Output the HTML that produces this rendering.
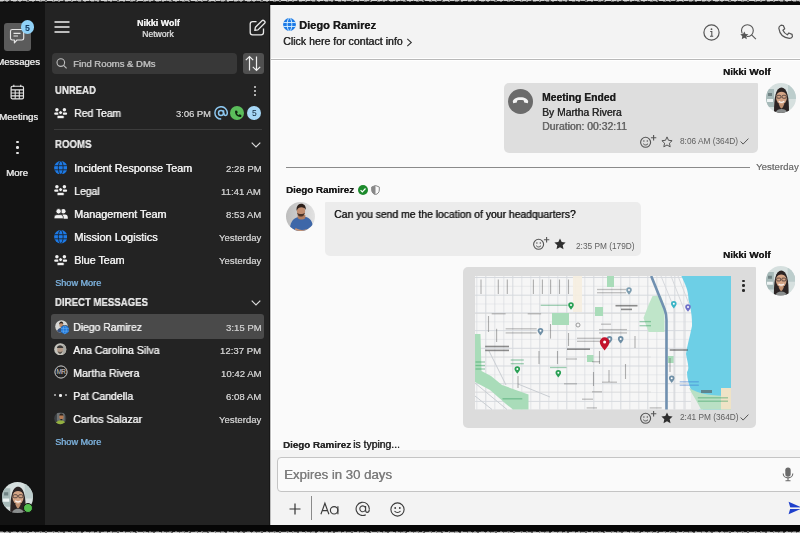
<!DOCTYPE html>
<html><head><meta charset="utf-8">
<style>
*{margin:0;padding:0;box-sizing:border-box}
html,body{width:800px;height:533px;overflow:hidden;background:#060606;font-family:"Liberation Sans",sans-serif;position:relative}
.a{position:absolute;display:block}
.t{position:absolute;white-space:nowrap;line-height:1;will-change:transform}
</style></head><body>
<div class="a" style="left:0px;top:0px;width:800px;height:1px;background:repeating-linear-gradient(90deg,#d2d2d2 0 4px,#9a9a9a 4px 5px,#c4c4c4 5px 9px,#6a6a6a 9px 11px,#d8d8d8 11px 17px,#8a8a8a 17px 18px);border-radius:0px;"></div>
<div class="a" style="left:0px;top:1px;width:800px;height:1px;background:repeating-linear-gradient(90deg,#6a6a6a 0 3px,#2a2a2a 3px 6px,#7a7a7a 6px 8px,#1a1a1a 8px 13px);border-radius:0px;"></div>
<div class="a" style="left:0px;top:531px;width:800px;height:1px;background:repeating-linear-gradient(90deg,#5a5a5a 0 3px,#1a1a1a 3px 6px,#6a6a6a 6px 8px,#2a2a2a 8px 13px);border-radius:0px;"></div>
<div class="a" style="left:0px;top:532px;width:800px;height:1px;background:repeating-linear-gradient(90deg,#c8c8c8 0 4px,#8a8a8a 4px 5px,#bcbcbc 5px 9px,#6a6a6a 9px 11px,#d0d0d0 11px 17px,#8a8a8a 17px 18px);border-radius:0px;"></div>
<div class="a" style="left:0px;top:3px;width:45px;height:522px;background:#131313;border-radius:0px;"></div>
<div class="a" style="left:45px;top:3px;width:224px;height:522px;background:#232323;border-radius:0px;"></div>
<div class="a" style="left:269px;top:3px;width:1px;height:522px;background:#171717;border-radius:0px;"></div>
<div class="a" style="left:270px;top:5px;width:530px;height:520px;background:#fafafa;border-radius:0px;"></div>
<div class="a" style="left:271px;top:5px;width:1px;height:520px;background:#ffffff;border-radius:0px;"></div>
<div class="a" style="left:270px;top:5px;width:530px;height:54px;background:#f3f3f3;border-radius:0px;"></div>
<div class="a" style="left:270px;top:58px;width:530px;height:1px;background:#ffffff;border-radius:0px;"></div>
<div class="a" style="left:270px;top:59px;width:530px;height:1px;background:#b8b8b8;border-radius:0px;"></div>
<div class="a" style="left:270px;top:60px;width:530px;height:1px;background:#ffffff;border-radius:0px;"></div>
<div class="a" style="left:270px;top:5px;width:1px;height:520px;background:#bdbdbd;border-radius:0px;"></div>
<div class="a" style="left:4px;top:23px;width:27px;height:28px;background:#5b5b5b;border-radius:3px;"></div>
<svg class="a" style="left:9px;top:28px" width="17" height="18" viewBox="0 0 17 18"><path d="M3.2 1.5h9.8q1.7 0 1.7 1.7v7.1q0 1.7-1.7 1.7h-5l-2.6 2.9v-2.9h-2.2q-1.7 0-1.7-1.7v-7.1q0-1.7 1.7-1.7z" fill="none" stroke="#e6e6e6" stroke-width="1.15" stroke-linejoin="round"/><path d="M4.5 5.3h7M4.5 8h4.5" stroke="#e6e6e6" stroke-width="1.2"/></svg>
<div class="a" style="left:20.5px;top:20.2px;width:13.8px;height:13.8px;border-radius:50%;background:#8fd1f7"></div>
<div class="t" style="left:24.95px;top:24.00px;font-size:8.8px;color:#143a60;font-weight:bold;">5</div>
<div class="t" style="left:-4.38px;top:57.00px;font-size:9.6px;color:#e2e2e2;text-shadow:0.468px 0 0 currentColor;">Messages</div>
<svg class="a" style="left:10px;top:84.3px" width="14.6" height="16.4" viewBox="0 0 16 18"><rect x="1.2" y="2.5" width="13.6" height="13.8" rx="1.5" fill="none" stroke="#e6e6e6" stroke-width="1.3"/><path d="M1.2 6.5h13.6M1.2 9.8h13.6M1.2 13h13.6M5.7 6.5v9.8M10.2 6.5v9.8M4.2 0.8v2.5M11.8 0.8v2.5" stroke="#e6e6e6" stroke-width="1.2"/></svg>
<div class="t" style="left:-1.48px;top:112.00px;font-size:9.6px;color:#e2e2e2;text-shadow:0.468px 0 0 currentColor;">Meetings</div>
<div class="a" style="left:16.3px;top:140.8px;width:2.4px;height:2.4px;border-radius:50%;background:#e6e6e6"></div>
<div class="a" style="left:16.3px;top:146.3px;width:2.4px;height:2.4px;border-radius:50%;background:#e6e6e6"></div>
<div class="a" style="left:16.3px;top:151.8px;width:2.4px;height:2.4px;border-radius:50%;background:#e6e6e6"></div>
<div class="t" style="left:6.06px;top:168.00px;font-size:9.6px;color:#e2e2e2;text-shadow:0.468px 0 0 currentColor;">More</div>
<svg class="a" style="left:54px;top:20px" width="16" height="14" viewBox="0 0 16 14"><path d="M0.5 2h15M0.5 7h15M0.5 12h15" stroke="#f0f0f0" stroke-width="1.6"/></svg>
<div class="t" style="left:136.57px;top:19.00px;font-size:8.9px;color:#f0f0f0;font-weight:bold;text-shadow:0.128px 0 0 currentColor;">Nikki Wolf</div>
<div class="t" style="left:142.23px;top:30.00px;font-size:8.6px;color:#d6d6d6;text-shadow:0.468px 0 0 currentColor;">Network</div>
<svg class="a" style="left:248px;top:19px" width="18" height="18" viewBox="0 0 18 18"><path d="M8.5 2.6H4.6Q2.2 2.6 2.2 5V13.4Q2.2 15.8 4.6 15.8H13.1Q15.5 15.8 15.5 13.4V9.5" fill="none" stroke="#eaeaea" stroke-width="1.3"/><path d="M6.8 11.4l0.6-3.1 6.6-6.6q1-1 2 0l0.6 0.6q1 1 0 2l-6.6 6.6z" fill="none" stroke="#eaeaea" stroke-width="1.3" stroke-linejoin="round"/></svg>
<div class="a" style="left:51.5px;top:52.5px;width:185.5px;height:21.5px;background:#383838;border-radius:4px;"></div>
<svg class="a" style="left:56px;top:58px" width="12" height="11" viewBox="0 0 12 11"><circle cx="4.8" cy="4.6" r="3.8" fill="none" stroke="#bdbdbd" stroke-width="1.1"/><path d="M7.6 7.4l3 3" stroke="#bdbdbd" stroke-width="1.2"/></svg>
<div class="t" style="left:73.20px;top:59.00px;font-size:9.5px;color:#bcbcbc;text-shadow:0.468px 0 0 currentColor;">Find Rooms &amp; DMs</div>
<div class="a" style="left:242.5px;top:52.5px;width:21.5px;height:21.5px;background:#505050;border-radius:3px;"></div>
<svg class="a" style="left:244px;top:55px" width="18" height="17" viewBox="0 0 18 17"><path d="M5.5 15.5V1.5M1.8 5.2l3.7-3.7 3.7 3.7" fill="none" stroke="#efefef" stroke-width="1.2"/><path d="M12.5 1.5v14M8.8 11.8l3.7 3.7 3.7-3.7" fill="none" stroke="#efefef" stroke-width="1.2"/></svg>
<div class="t" style="left:55.20px;top:85.00px;font-size:10.5px;color:#e4e4e4;font-weight:bold;text-shadow:0.043px 0 0 currentColor;transform:scaleX(0.91);transform-origin:0 0;">UNREAD</div>
<div class="a" style="left:254.2px;top:86px;width:2px;height:2px;border-radius:50%;background:#dcdcdc"></div>
<div class="a" style="left:254.2px;top:90.2px;width:2px;height:2px;border-radius:50%;background:#dcdcdc"></div>
<div class="a" style="left:254.2px;top:94.4px;width:2px;height:2px;border-radius:50%;background:#dcdcdc"></div>
<svg class="a" style="left:54px;top:107.8px" width="14" height="11" viewBox="0 0 14 11"><circle cx="2.9" cy="1.8" r="1.75" fill="#f2f2f2"/><circle cx="10.4" cy="1.8" r="1.75" fill="#f2f2f2"/><rect x="0.2" y="4.6" width="4.4" height="2.1" rx="1" fill="#f2f2f2"/><rect x="8.7" y="4.6" width="4.4" height="2.1" rx="1" fill="#f2f2f2"/><circle cx="6.6" cy="4.6" r="1.95" fill="#f2f2f2" stroke="#232323" stroke-width="0.9"/><rect x="2.9" y="7.4" width="7.4" height="3.2" rx="1.5" fill="#f2f2f2" stroke="#232323" stroke-width="0.7"/></svg>
<div class="t" style="left:73.50px;top:108.00px;font-size:10.7px;color:#ededed;text-shadow:0.468px 0 0 currentColor;transform:scaleX(0.9656);transform-origin:0 0;">Red Team</div>
<div class="t" style="left:176.20px;top:109.00px;font-size:9.4px;color:#c6c6c6;text-shadow:0.102px 0 0 currentColor;">3:06 PM</div>
<svg class="a" style="left:214.2px;top:106.3px" width="14" height="14" viewBox="0 0 14 14"><path d="M9.9 7.2c0 1.5 0.8 2.2 1.8 2.2s1.6-1.1 1.6-2.6A6.2 6.2 0 1 0 7.2 13.1" fill="none" stroke="#8cc6ee" stroke-width="1.5"/><circle cx="7" cy="6.9" r="2.5" fill="none" stroke="#8cc6ee" stroke-width="1.5"/><path d="M9.6 4.3v3.8" stroke="#8cc6ee" stroke-width="1.4"/></svg>
<div class="a" style="left:230.3px;top:106.4px;width:14px;height:14px;border-radius:50%;background:#5bbd5b"></div>
<svg class="a" style="left:233.5px;top:109.5px" width="8" height="8" viewBox="0 0 8 8"><path d="M1.6 0.6l1.5 0.1 0.7 1.8-0.9 0.7c0.4 0.9 1 1.5 1.9 1.9l0.7-0.9 1.8 0.7 0.1 1.5c-0.3 0.5-0.8 0.7-1.4 0.7C3.2 6.8 1.2 4.8 1 2c0-0.6 0.2-1.1 0.6-1.4z" fill="#10240f"/></svg>
<div class="a" style="left:247.2px;top:106.4px;width:14px;height:14px;border-radius:50%;background:#a6d7f6"></div>
<div class="t" style="left:251.94px;top:109.00px;font-size:8.5px;color:#10283c;">5</div>
<div class="a" style="left:54px;top:129px;width:208px;height:1px;background:#3c3c3c;border-radius:0px;"></div>
<div class="t" style="left:55.00px;top:139.00px;font-size:10.5px;color:#e4e4e4;font-weight:bold;text-shadow:0.043px 0 0 currentColor;transform:scaleX(0.92);transform-origin:0 0;">ROOMS</div>
<svg class="a" style="left:250.5px;top:141.5px" width="10" height="6" viewBox="0 0 10 6"><path d="M0.7 0.7l4.3 4.3 4.3-4.3" fill="none" stroke="#dcdcdc" stroke-width="1.2"/></svg>
<svg class="a" style="left:53.8px;top:160.7px" width="13.5" height="13.5" viewBox="0 0 13 13"><circle cx="6.5" cy="6.5" r="6.4" fill="#1d7ae6"/><g stroke="#1b2a3c" stroke-width="0.9" fill="none"><ellipse cx="6.5" cy="6.5" rx="2.3" ry="6.4"/><path d="M0.3 4.5h12.4M0.3 8.5h12.4"/></g></svg>
<div class="t" style="left:73.50px;top:163.00px;font-size:10.7px;color:#ededed;text-shadow:0.468px 0 0 currentColor;transform:scaleX(1.0037);transform-origin:0 0;">Incident Response Team</div>
<div class="t" style="left:225.55px;top:164.00px;font-size:9.6px;color:#c6c6c6;text-shadow:0.102px 0 0 currentColor;">2:28 PM</div>
<svg class="a" style="left:54px;top:185.4px" width="14" height="11" viewBox="0 0 14 11"><circle cx="2.9" cy="1.8" r="1.75" fill="#f2f2f2"/><circle cx="10.4" cy="1.8" r="1.75" fill="#f2f2f2"/><rect x="0.2" y="4.6" width="4.4" height="2.1" rx="1" fill="#f2f2f2"/><rect x="8.7" y="4.6" width="4.4" height="2.1" rx="1" fill="#f2f2f2"/><circle cx="6.6" cy="4.6" r="1.95" fill="#f2f2f2" stroke="#232323" stroke-width="0.9"/><rect x="2.9" y="7.4" width="7.4" height="3.2" rx="1.5" fill="#f2f2f2" stroke="#232323" stroke-width="0.7"/></svg>
<div class="t" style="left:73.50px;top:186.00px;font-size:10.7px;color:#ededed;text-shadow:0.468px 0 0 currentColor;transform:scaleX(0.9741);transform-origin:0 0;">Legal</div>
<div class="t" style="left:221.45px;top:187.00px;font-size:9.6px;color:#c6c6c6;text-shadow:0.102px 0 0 currentColor;">11:41 AM</div>
<svg class="a" style="left:54px;top:207.9px" width="14" height="11" viewBox="0 0 14 11"><circle cx="9.3" cy="3.3" r="2.3" fill="#f2f2f2"/><path d="M8.5 6.6h2.5c1.8 0 2.8 1.3 2.8 3v1.2H8.5z" fill="#f2f2f2"/><circle cx="4.6" cy="3.3" r="2.7" fill="#f2f2f2" stroke="#232323" stroke-width="0.9"/><path d="M0.1 10.8V9.6c0-1.8 1.1-3 2.9-3h3.4c1.8 0 2.9 1.2 2.9 3v1.2z" fill="#f2f2f2" stroke="#232323" stroke-width="0.8"/></svg>
<div class="t" style="left:73.50px;top:209.00px;font-size:10.7px;color:#ededed;text-shadow:0.468px 0 0 currentColor;transform:scaleX(1.011);transform-origin:0 0;">Management Team</div>
<div class="t" style="left:226.08px;top:210.00px;font-size:9.6px;color:#c6c6c6;text-shadow:0.102px 0 0 currentColor;">8:53 AM</div>
<svg class="a" style="left:53.8px;top:230.1px" width="13.5" height="13.5" viewBox="0 0 13 13"><circle cx="6.5" cy="6.5" r="6.4" fill="#1d7ae6"/><g stroke="#1b2a3c" stroke-width="0.9" fill="none"><ellipse cx="6.5" cy="6.5" rx="2.3" ry="6.4"/><path d="M0.3 4.5h12.4M0.3 8.5h12.4"/></g></svg>
<div class="t" style="left:73.50px;top:232.00px;font-size:10.7px;color:#ededed;text-shadow:0.468px 0 0 currentColor;transform:scaleX(1.035);transform-origin:0 0;">Mission Logistics</div>
<div class="t" style="left:218.96px;top:233.00px;font-size:9.6px;color:#c6c6c6;text-shadow:0.102px 0 0 currentColor;">Yesterday</div>
<svg class="a" style="left:54px;top:254.9px" width="14" height="11" viewBox="0 0 14 11"><circle cx="2.9" cy="1.8" r="1.75" fill="#f2f2f2"/><circle cx="10.4" cy="1.8" r="1.75" fill="#f2f2f2"/><rect x="0.2" y="4.6" width="4.4" height="2.1" rx="1" fill="#f2f2f2"/><rect x="8.7" y="4.6" width="4.4" height="2.1" rx="1" fill="#f2f2f2"/><circle cx="6.6" cy="4.6" r="1.95" fill="#f2f2f2" stroke="#232323" stroke-width="0.9"/><rect x="2.9" y="7.4" width="7.4" height="3.2" rx="1.5" fill="#f2f2f2" stroke="#232323" stroke-width="0.7"/></svg>
<div class="t" style="left:73.50px;top:255.00px;font-size:10.7px;color:#ededed;text-shadow:0.468px 0 0 currentColor;transform:scaleX(0.9909);transform-origin:0 0;">Blue Team</div>
<div class="t" style="left:218.96px;top:256.00px;font-size:9.6px;color:#c6c6c6;text-shadow:0.102px 0 0 currentColor;">Yesterday</div>
<div class="t" style="left:55.00px;top:279.00px;font-size:9.1px;color:#79acd6;text-shadow:0.468px 0 0 currentColor;">Show More</div>
<div class="t" style="left:55.00px;top:297.00px;font-size:10.5px;color:#e4e4e4;font-weight:bold;text-shadow:0.043px 0 0 currentColor;transform:scaleX(0.916);transform-origin:0 0;">DIRECT MESSAGES</div>
<svg class="a" style="left:250.5px;top:300px" width="10" height="6" viewBox="0 0 10 6"><path d="M0.7 0.7l4.3 4.3 4.3-4.3" fill="none" stroke="#dcdcdc" stroke-width="1.2"/></svg>
<div class="a" style="left:51px;top:314px;width:213px;height:25px;background:#4a4a4a;border-radius:3px;"></div>
<svg class="a" style="left:54.5px;top:320px" width="13" height="13" viewBox="0 0 13 13"><defs><clipPath id="cds"><circle cx="6.5" cy="6.5" r="6.3"/></clipPath></defs><g clip-path="url(#cds)"><rect width="13" height="13" fill="#d8d8d6"/><path d="M1.5 13c0.4-3.4 2.2-5 4.6-5s3.8 1.6 4.3 5z" fill="#34507e"/><ellipse cx="6.2" cy="5" rx="1.9" ry="2.4" fill="#c09070"/><path d="M4.2 4.6c0-2 0.9-3 2.1-3s2 0.8 2 2.6c-0.6-0.6-1.3-0.9-2-0.9s-1.5 0.4-2.1 1.3z" fill="#2a211c"/></g></svg>
<svg class="a" style="left:59.9px;top:325.2px" width="9.6" height="9.6" viewBox="0 0 9.6 9.6"><circle cx="4.8" cy="4.8" r="4.7" fill="#4a4a4a"/><circle cx="4.8" cy="4.8" r="4.1" fill="#1f78dc"/><g stroke="#6cb0f0" stroke-width="0.6" fill="none"><ellipse cx="4.8" cy="4.8" rx="1.6" ry="4.1"/><path d="M0.8 3.4h8M0.8 6.2h8"/></g></svg>
<div class="t" style="left:73.30px;top:322.00px;font-size:10.7px;color:#ededed;text-shadow:0.468px 0 0 currentColor;transform:scaleX(0.9737);transform-origin:0 0;">Diego Ramirez</div>
<div class="t" style="left:225.55px;top:323.00px;font-size:9.6px;color:#c6c6c6;text-shadow:0.102px 0 0 currentColor;">3:15 PM</div>
<svg class="a" style="left:54.4px;top:342.8px" width="12.6" height="12.6" viewBox="0 0 13 13"><defs><clipPath id="cas"><circle cx="6.5" cy="6.5" r="6.3"/></clipPath></defs><g clip-path="url(#cas)"><rect width="13" height="13" fill="#c4c3bc"/><rect x="9" y="0" width="4" height="13" fill="#a9a8a2"/><ellipse cx="6.3" cy="7" rx="3" ry="3.6" fill="#b39a88"/><path d="M3 5.2c0.3-2 1.6-2.8 3.3-2.8s3 0.8 3.3 2.8z" fill="#3a3836"/><path d="M3.8 8.6c0.6 2 1.5 2.8 2.5 2.8s1.9-0.8 2.5-2.8c-0.8 0.5-1.6 0.7-2.5 0.7s-1.7-0.2-2.5-0.7z" fill="#5c5650"/></g></svg>
<div class="t" style="left:73.30px;top:345.00px;font-size:10.7px;color:#ededed;text-shadow:0.468px 0 0 currentColor;transform:scaleX(0.9816);transform-origin:0 0;">Ana Carolina Silva</div>
<div class="t" style="left:220.21px;top:346.00px;font-size:9.6px;color:#c6c6c6;text-shadow:0.102px 0 0 currentColor;">12:37 PM</div>
<svg class="a" style="left:53.5px;top:365.1px" width="14" height="14" viewBox="0 0 14 14"><circle cx="7" cy="7" r="6.1" fill="none" stroke="#cfcfcf" stroke-width="1"/><text x="7" y="9.3" font-size="6.4" fill="#cfcfcf" text-anchor="middle" font-family="Liberation Sans" letter-spacing="-0.4">MR</text></svg>
<div class="t" style="left:73.30px;top:368.00px;font-size:10.7px;color:#ededed;text-shadow:0.468px 0 0 currentColor;transform:scaleX(0.9853);transform-origin:0 0;">Martha Rivera</div>
<div class="t" style="left:220.74px;top:369.00px;font-size:9.6px;color:#c6c6c6;text-shadow:0.102px 0 0 currentColor;">10:42 AM</div>
<div class="a" style="left:54.3px;top:394.4px;width:2.0px;height:2.0px;border-radius:50%;background:#bdbdbd"></div>
<div class="a" style="left:59.2px;top:394.09999999999997px;width:2.6px;height:2.6px;border-radius:50%;background:#f0f0f0"></div>
<div class="a" style="left:64.5px;top:394.4px;width:2.0px;height:2.0px;border-radius:50%;background:#bdbdbd"></div>
<div class="t" style="left:73.30px;top:391.00px;font-size:10.7px;color:#ededed;text-shadow:0.468px 0 0 currentColor;transform:scaleX(0.9793);transform-origin:0 0;">Pat Candella</div>
<div class="t" style="left:226.08px;top:392.00px;font-size:9.6px;color:#c6c6c6;text-shadow:0.102px 0 0 currentColor;">6:08 AM</div>
<svg class="a" style="left:54.4px;top:412.2px" width="12.6" height="12.6" viewBox="0 0 13 13"><defs><clipPath id="ccs"><circle cx="6.5" cy="6.5" r="6.3"/></clipPath></defs><g clip-path="url(#ccs)"><rect width="13" height="13" fill="#3c4044"/><rect x="3" y="1" width="8" height="8" fill="#6e7274"/><ellipse cx="7.6" cy="5" rx="2.2" ry="2.8" fill="#b57a52"/><path d="M5.4 3.6c0.3-1.4 1.1-2 2.2-2s1.9 0.6 2.2 2z" fill="#2a2420"/><path d="M1 13c0.8-3 3-4.6 6-4.6s5 1.6 5.6 4.6z" fill="#93b040"/><path d="M6.6 7.2h2v1.4h-2z" fill="#222"/></g></svg>
<div class="t" style="left:73.30px;top:414.00px;font-size:10.7px;color:#ededed;text-shadow:0.468px 0 0 currentColor;transform:scaleX(0.9819);transform-origin:0 0;">Carlos Salazar</div>
<div class="t" style="left:218.96px;top:415.00px;font-size:9.6px;color:#c6c6c6;text-shadow:0.102px 0 0 currentColor;">Yesterday</div>
<div class="t" style="left:55.00px;top:438.00px;font-size:9.1px;color:#79acd6;text-shadow:0.468px 0 0 currentColor;">Show More</div>
<svg class="a" style="left:2px;top:482px" width="31" height="31" viewBox="0 0 30 30"><defs><clipPath id="nk1"><circle cx="15" cy="15" r="15"/></clipPath></defs><g clip-path="url(#nk1)"><rect width="30" height="30" fill="#d6e0df"/><path d="M0 6h8v18H0z" fill="#a7bab9"/><path d="M2 10h4v3H2z" fill="#6f8283"/><path d="M1 16h6v3H1z" fill="#eef4f4"/><path d="M22 2h8v14h-8z" fill="#bccdcc"/><path d="M8 30c0-8 0.3-14 1.6-18.5C11 7 12.8 4.6 15.5 4.6s4.6 2.4 6 6.9c1.3 4.5 1.5 10.5 1.5 18.5z" fill="#2c2424"/><path d="M9 31c1.2-3.8 3.5-5 6.5-5s5.3 1.2 6.5 5z" fill="#8a8e8e"/><path d="M12.7 21c1 2.6 1.8 4.4 2.8 4.4s1.8-1.8 2.8-4.4z" fill="#c09070"/><ellipse cx="15.5" cy="14.6" rx="5.4" ry="6.9" fill="#d4a586"/><path d="M10 12c0.4-4 2.6-6.4 5.5-6.4s5.1 2.4 5.5 6.4c-1.5-2.4-3.4-3.3-5.5-3.3s-4 0.9-5.5 3.3z" fill="#2c2424"/><rect x="10.8" y="12.3" width="4.1" height="2.9" rx="1" fill="none" stroke="#3a3030" stroke-width="0.75"/><rect x="16.1" y="12.3" width="4.1" height="2.9" rx="1" fill="none" stroke="#3a3030" stroke-width="0.75"/><path d="M12.8 18.2c1.6 1.4 3.8 1.4 5.4 0" fill="none" stroke="#f8f2f0" stroke-width="1.4"/></g></svg>
<div class="a" style="left:23px;top:503px;width:10px;height:10px;border-radius:50%;background:#55c14f;border:1px solid #131313"></div>
<svg class="a" style="left:282.5px;top:18.3px" width="13" height="13" viewBox="0 0 13 13"><circle cx="6.5" cy="6.5" r="6.4" fill="#1d7ae6"/><g stroke="#d8f0ff" stroke-width="0.9" fill="none"><ellipse cx="6.5" cy="6.5" rx="2.3" ry="6.4"/><path d="M0.3 4.5h12.4M0.3 8.5h12.4"/></g></svg>
<div class="t" style="left:298.50px;top:20.00px;font-size:11.1px;color:#1a1a1a;font-weight:bold;text-shadow:0.128px 0 0 currentColor;">Diego Ramirez</div>
<div class="t" style="left:283.00px;top:36.00px;font-size:10.6px;color:#2a2a2a;text-shadow:0.468px 0 0 currentColor;">Click here for contact info</div>
<svg class="a" style="left:406px;top:38px" width="7" height="9" viewBox="0 0 7 9"><path d="M1.3 0.8l4 3.7-4 3.7" fill="none" stroke="#333" stroke-width="1.1"/></svg>
<svg class="a" style="left:703px;top:24px" width="17" height="17" viewBox="0 0 17 17"><circle cx="8.5" cy="8.5" r="7.6" fill="none" stroke="#555" stroke-width="1.2"/><circle cx="8.5" cy="5.2" r="0.9" fill="#555"/><path d="M7.2 7.5h1.6v4.5M7 12.2h3.2" fill="none" stroke="#555" stroke-width="1.1"/></svg>
<svg class="a" style="left:740px;top:23px" width="18" height="18" viewBox="0 0 18 18"><circle cx="7.4" cy="7.6" r="5.9" fill="none" stroke="#555" stroke-width="1.1"/><path d="M11.6 11.9l4.3 4.3" stroke="#555" stroke-width="1.1"/><path d="M4.3 8.4l1.25 2.55 2.8 0.4-2.03 1.98 0.48 2.8-2.5-1.32-2.5 1.32 0.48-2.8-2.03-1.98 2.8-0.4z" fill="#555" stroke="#f2f2f2" stroke-width="0.9" paint-order="stroke"/></svg>
<svg class="a" style="left:777px;top:24px" width="17" height="17" viewBox="0 0 17 17"><path d="M4 1.2l2.3 0.3 1.4 3.3-1.8 1.5c0.9 2 2.4 3.6 4.4 4.5l1.5-1.8 3.3 1.4 0.3 2.3c-0.6 1-1.7 1.6-3 1.6C6.3 14 2.7 10.4 1.8 4.2c0-1.3 0.9-2.5 2.2-3z" fill="none" stroke="#555" stroke-width="1.2" stroke-linejoin="round"/></svg>
<div class="t" style="left:722.73px;top:67.00px;font-size:9.9px;color:#1a1a1a;font-weight:bold;text-shadow:0.128px 0 0 currentColor;">Nikki Wolf</div>
<div class="a" style="left:503.5px;top:83px;width:254px;height:69.5px;background:#dedede;border-radius:5px;border-top-right-radius:1px;"></div>
<div class="a" style="left:507.8px;top:89px;width:25px;height:25px;border-radius:50%;background:#6b6b6b"></div>
<svg class="a" style="left:512px;top:96.3px" width="17" height="8" viewBox="0 0 17 8"><path d="M0.8 5.6c0-2.5 3.4-4.4 7.7-4.4s7.7 1.9 7.7 4.4l-0.4 1.6-3.6-0.6-0.4-2.1c-1-0.4-2.1-0.5-3.3-0.5s-2.3 0.1-3.3 0.5l-0.4 2.1-3.6 0.6z" fill="#f4f4f4"/></svg>
<div class="t" style="left:541.50px;top:93.00px;font-size:10.4px;color:#1e1e1e;font-weight:bold;text-shadow:0.128px 0 0 currentColor;">Meeting Ended</div>
<div class="t" style="left:541.50px;top:108.00px;font-size:10.3px;color:#2a2a2a;text-shadow:0.468px 0 0 currentColor;">By Martha Rivera</div>
<div class="t" style="left:541.50px;top:122.00px;font-size:10.4px;color:#666666;text-shadow:0.468px 0 0 currentColor;">Duration: 00:32:11</div>
<svg class="a" style="left:640px;top:135px" width="17" height="13" viewBox="0 0 17 13"><circle cx="5.6" cy="7.3" r="5" fill="none" stroke="#555" stroke-width="1.1"/><circle cx="3.9" cy="6.1" r="0.75" fill="#555"/><circle cx="7.3" cy="6.1" r="0.75" fill="#555"/><path d="M3.2 8.7c1.3 1.7 3.5 1.7 4.8 0" fill="none" stroke="#555" stroke-width="1"/><path d="M13.6 0v5.4M10.9 2.7h5.4" stroke="#555" stroke-width="1.1"/></svg>
<svg class="a" style="left:660.5px;top:136px" width="12" height="12" viewBox="0 0 12 12"><path d="M6 0.9l1.5 3.4 3.6 0.4-2.7 2.5 0.8 3.6L6 9l-3.2 1.8 0.8-3.6L0.9 4.7l3.6-0.4z" fill="none" stroke="#555" stroke-width="1"/></svg>
<div class="t" style="left:679.88px;top:137.00px;font-size:8.3px;color:#606060;">8:06 AM (364D)</div>
<svg class="a" style="left:739.5px;top:138px" width="9" height="7" viewBox="0 0 9 7"><path d="M0.6 3.5l2.5 2.6 5.3-5.5" fill="none" stroke="#555" stroke-width="1"/></svg>
<svg class="a" style="left:765.5px;top:83px" width="30" height="30" viewBox="0 0 30 30"><defs><clipPath id="nk2"><circle cx="15" cy="15" r="15"/></clipPath></defs><g clip-path="url(#nk2)"><rect width="30" height="30" fill="#d6e0df"/><path d="M0 6h8v18H0z" fill="#a7bab9"/><path d="M2 10h4v3H2z" fill="#6f8283"/><path d="M1 16h6v3H1z" fill="#eef4f4"/><path d="M22 2h8v14h-8z" fill="#bccdcc"/><path d="M8 30c0-8 0.3-14 1.6-18.5C11 7 12.8 4.6 15.5 4.6s4.6 2.4 6 6.9c1.3 4.5 1.5 10.5 1.5 18.5z" fill="#2c2424"/><path d="M9 31c1.2-3.8 3.5-5 6.5-5s5.3 1.2 6.5 5z" fill="#8a8e8e"/><path d="M12.7 21c1 2.6 1.8 4.4 2.8 4.4s1.8-1.8 2.8-4.4z" fill="#c09070"/><ellipse cx="15.5" cy="14.6" rx="5.4" ry="6.9" fill="#d4a586"/><path d="M10 12c0.4-4 2.6-6.4 5.5-6.4s5.1 2.4 5.5 6.4c-1.5-2.4-3.4-3.3-5.5-3.3s-4 0.9-5.5 3.3z" fill="#2c2424"/><rect x="10.8" y="12.3" width="4.1" height="2.9" rx="1" fill="none" stroke="#3a3030" stroke-width="0.75"/><rect x="16.1" y="12.3" width="4.1" height="2.9" rx="1" fill="none" stroke="#3a3030" stroke-width="0.75"/><path d="M12.8 18.2c1.6 1.4 3.8 1.4 5.4 0" fill="none" stroke="#f8f2f0" stroke-width="1.4"/></g></svg>
<div class="a" style="left:286.3px;top:167px;width:463.5px;height:1px;background:#8a8a8a;border-radius:0px;"></div>
<div class="t" style="left:755.60px;top:162.00px;font-size:9.7px;color:#777777;text-shadow:0.128px 0 0 currentColor;">Yesterday</div>
<div class="t" style="left:286.00px;top:185.00px;font-size:9.8px;color:#1a1a1a;font-weight:bold;text-shadow:0.128px 0 0 currentColor;">Diego Ramirez</div>
<svg class="a" style="left:358px;top:185px" width="10" height="10" viewBox="0 0 10 10"><circle cx="5" cy="5" r="5" fill="#1c8a2c"/><path d="M2.6 5.1l1.7 1.7 3.2-3.3" fill="none" stroke="#fff" stroke-width="1.2"/></svg>
<svg class="a" style="left:371px;top:185px" width="9" height="10" viewBox="0 0 9 10"><path d="M4.5 0.5l3.8 1.5v3c0 2.4-1.6 4-3.8 4.6C2.3 9 0.7 7.4 0.7 5V2z" fill="none" stroke="#888" stroke-width="1"/><path d="M4.5 0.5v9.1C2.3 9 0.7 7.4 0.7 5V2z" fill="#888"/></svg>
<svg class="a" style="left:286px;top:202px" width="29" height="29" viewBox="0 0 30 30"><defs><clipPath id="dg1"><circle cx="15" cy="15" r="15"/></clipPath><linearGradient id="dg1g" x1="0" x2="1"><stop offset="0" stop-color="#bdbdbd"/><stop offset="1" stop-color="#e2e2e2"/></linearGradient></defs><g clip-path="url(#dg1)"><rect width="30" height="30" fill="url(#dg1g)"/><path d="M4 30c0-8 2.5-13 8.5-14.5 4-1 9-0.5 12 2 3 2.5 3.5 7 3.5 12.5z" fill="#3e67a8"/><path d="M10 27c3 2 7 2.5 12 1l5 3H8z" fill="#c89474"/><path d="M12 16.5c1.2 1.2 2.5 1.6 4 1.6s2.8-0.4 4-1.6v-3h-8z" fill="#b07e62"/><ellipse cx="15.5" cy="9.2" rx="4.3" ry="5.4" fill="#c18d6f"/><path d="M11 9c-0.5-4.5 1.5-7 4.5-7.2 3-0.2 5.3 2 5 6.5-0.8-1.8-2.3-2.8-4.6-2.8s-3.9 1.2-4.9 3.5z" fill="#2b1f1a"/><path d="M11.4 11c0.8 3.2 2.3 4 4.1 4s3.3-0.8 4.1-4c-1 0.9-2.5 1.4-4.1 1.4s-3.1-0.5-4.1-1.4z" fill="#4a3226"/></g></svg>
<div class="a" style="left:325px;top:202px;width:315.5px;height:53.5px;background:#ececec;border-radius:5px;border-top-left-radius:1px;"></div>
<div class="t" style="left:333.80px;top:209.00px;font-size:10.5px;color:#1f1f1f;text-shadow:0.468px 0 0 currentColor;transform:scaleX(0.9875);transform-origin:0 0;">Can you send me the location of your headquarters?</div>
<svg class="a" style="left:532.8px;top:237.3px" width="17" height="13" viewBox="0 0 17 13"><circle cx="5.6" cy="7.3" r="5" fill="none" stroke="#555" stroke-width="1.1"/><circle cx="3.9" cy="6.1" r="0.75" fill="#555"/><circle cx="7.3" cy="6.1" r="0.75" fill="#555"/><path d="M3.2 8.7c1.3 1.7 3.5 1.7 4.8 0" fill="none" stroke="#555" stroke-width="1"/><path d="M13.6 0v5.4M10.9 2.7h5.4" stroke="#555" stroke-width="1.1"/></svg>
<svg class="a" style="left:554px;top:238px" width="12" height="12" viewBox="0 0 12 12"><path d="M6 0.5l1.7 3.6 3.9 0.5-2.9 2.7 0.8 3.9L6 9.3l-3.5 1.9 0.8-3.9L0.4 4.6l3.9-0.5z" fill="#2e2e2e"/></svg>
<div class="t" style="left:575.92px;top:242.00px;font-size:8.3px;color:#606060;">2:35 PM (179D)</div>
<div class="t" style="left:722.73px;top:250.00px;font-size:9.9px;color:#1a1a1a;font-weight:bold;text-shadow:0.128px 0 0 currentColor;">Nikki Wolf</div>
<div class="a" style="left:463px;top:267px;width:292.5px;height:161px;background:#dcdcdc;border-radius:5px;border-top-right-radius:1px;"></div>
<svg class="a" style="left:765.5px;top:266px" width="29.5" height="29.5" viewBox="0 0 30 30"><defs><clipPath id="nk3"><circle cx="15" cy="15" r="15"/></clipPath></defs><g clip-path="url(#nk3)"><rect width="30" height="30" fill="#d6e0df"/><path d="M0 6h8v18H0z" fill="#a7bab9"/><path d="M2 10h4v3H2z" fill="#6f8283"/><path d="M1 16h6v3H1z" fill="#eef4f4"/><path d="M22 2h8v14h-8z" fill="#bccdcc"/><path d="M8 30c0-8 0.3-14 1.6-18.5C11 7 12.8 4.6 15.5 4.6s4.6 2.4 6 6.9c1.3 4.5 1.5 10.5 1.5 18.5z" fill="#2c2424"/><path d="M9 31c1.2-3.8 3.5-5 6.5-5s5.3 1.2 6.5 5z" fill="#8a8e8e"/><path d="M12.7 21c1 2.6 1.8 4.4 2.8 4.4s1.8-1.8 2.8-4.4z" fill="#c09070"/><ellipse cx="15.5" cy="14.6" rx="5.4" ry="6.9" fill="#d4a586"/><path d="M10 12c0.4-4 2.6-6.4 5.5-6.4s5.1 2.4 5.5 6.4c-1.5-2.4-3.4-3.3-5.5-3.3s-4 0.9-5.5 3.3z" fill="#2c2424"/><rect x="10.8" y="12.3" width="4.1" height="2.9" rx="1" fill="none" stroke="#3a3030" stroke-width="0.75"/><rect x="16.1" y="12.3" width="4.1" height="2.9" rx="1" fill="none" stroke="#3a3030" stroke-width="0.75"/><path d="M12.8 18.2c1.6 1.4 3.8 1.4 5.4 0" fill="none" stroke="#f8f2f0" stroke-width="1.4"/></g></svg>
<svg class="a" style="left:474.5px;top:276px" width="256.5" height="133.5" viewBox="0 0 256.5 133.5"><rect width="256.5" height="133.5" fill="#f6f6f6"/><path d="M1.8 0V133.5" stroke="#d6d9de" stroke-width="1" opacity="0.6"/><path d="M10.8 0V133.5" stroke="#d6d9de" stroke-width="1" opacity="0.95"/><path d="M19.8 0V133.5" stroke="#d6d9de" stroke-width="1" opacity="0.6"/><path d="M28.8 0V133.5" stroke="#d6d9de" stroke-width="1" opacity="0.6"/><path d="M37.8 0V133.5" stroke="#d6d9de" stroke-width="1" opacity="0.95"/><path d="M46.8 0V133.5" stroke="#d6d9de" stroke-width="1" opacity="0.6"/><path d="M55.8 0V133.5" stroke="#d6d9de" stroke-width="1" opacity="0.6"/><path d="M64.8 0V133.5" stroke="#d6d9de" stroke-width="1" opacity="0.95"/><path d="M73.8 0V133.5" stroke="#d6d9de" stroke-width="1" opacity="0.6"/><path d="M82.8 0V133.5" stroke="#d6d9de" stroke-width="1" opacity="0.6"/><path d="M91.8 0V133.5" stroke="#d6d9de" stroke-width="1" opacity="0.95"/><path d="M100.8 0V133.5" stroke="#d6d9de" stroke-width="1" opacity="0.6"/><path d="M109.8 0V133.5" stroke="#d6d9de" stroke-width="1" opacity="0.6"/><path d="M118.8 0V133.5" stroke="#d6d9de" stroke-width="1" opacity="0.95"/><path d="M127.8 0V133.5" stroke="#d6d9de" stroke-width="1" opacity="0.6"/><path d="M136.8 0V133.5" stroke="#d6d9de" stroke-width="1" opacity="0.6"/><path d="M145.8 0V133.5" stroke="#d6d9de" stroke-width="1" opacity="0.95"/><path d="M154.8 0V133.5" stroke="#d6d9de" stroke-width="1" opacity="0.6"/><path d="M163.8 0V133.5" stroke="#d6d9de" stroke-width="1" opacity="0.6"/><path d="M172.8 0V133.5" stroke="#d6d9de" stroke-width="1" opacity="0.95"/><path d="M181.8 0V133.5" stroke="#d6d9de" stroke-width="1" opacity="0.6"/><path d="M190.8 0V133.5" stroke="#d6d9de" stroke-width="1" opacity="0.6"/><path d="M199.8 0V133.5" stroke="#d6d9de" stroke-width="1" opacity="0.95"/><path d="M208.8 0V133.5" stroke="#d6d9de" stroke-width="1" opacity="0.6"/><path d="M217.8 0V133.5" stroke="#d6d9de" stroke-width="1" opacity="0.6"/><path d="M226.8 0V133.5" stroke="#d6d9de" stroke-width="1" opacity="0.95"/><path d="M235.8 0V133.5" stroke="#d6d9de" stroke-width="1" opacity="0.6"/><path d="M244.8 0V133.5" stroke="#d6d9de" stroke-width="1" opacity="0.6"/><path d="M253.8 0V133.5" stroke="#d6d9de" stroke-width="1" opacity="0.95"/><path d="M0 1.5H256.5" stroke="#d6d9de" stroke-width="1" opacity="0.95"/><path d="M0 10.3H256.5" stroke="#d6d9de" stroke-width="1" opacity="0.4"/><path d="M0 19.2H256.5" stroke="#d6d9de" stroke-width="1" opacity="0.95"/><path d="M0 28.0H256.5" stroke="#d6d9de" stroke-width="1" opacity="0.4"/><path d="M0 36.9H256.5" stroke="#d6d9de" stroke-width="1" opacity="0.95"/><path d="M0 45.8H256.5" stroke="#d6d9de" stroke-width="1" opacity="0.4"/><path d="M0 54.6H256.5" stroke="#d6d9de" stroke-width="1" opacity="0.95"/><path d="M0 63.4H256.5" stroke="#d6d9de" stroke-width="1" opacity="0.4"/><path d="M0 72.3H256.5" stroke="#d6d9de" stroke-width="1" opacity="0.95"/><path d="M0 81.1H256.5" stroke="#d6d9de" stroke-width="1" opacity="0.4"/><path d="M0 90.0H256.5" stroke="#d6d9de" stroke-width="1" opacity="0.95"/><path d="M0 98.8H256.5" stroke="#d6d9de" stroke-width="1" opacity="0.4"/><path d="M0 107.7H256.5" stroke="#d6d9de" stroke-width="1" opacity="0.95"/><path d="M0 116.5H256.5" stroke="#d6d9de" stroke-width="1" opacity="0.4"/><path d="M0 125.4H256.5" stroke="#d6d9de" stroke-width="1" opacity="0.95"/><path d="M0 134.2H256.5" stroke="#d6d9de" stroke-width="1" opacity="0.4"/><path d="M0 37.5H176M0 81H176M0 116H176" stroke="#d6d6d6" stroke-width="0.6"/><path d="M0 107L32 133.5M0 120L17 133.5M14 75L31 109M43 108L75 121" stroke="#c9cdd2" stroke-width="1" fill="none"/><rect x="98" y="0" width="9" height="36" fill="#f6eee0" opacity="0.9"/><rect x="77" y="37" width="17" height="12" fill="#a9dcb9"/><rect x="120" y="31" width="8" height="9" fill="#a9dcb9"/><rect x="132" y="0" width="7" height="11" fill="#a9dcb9"/><rect x="112" y="79" width="6.5" height="7" fill="#a9dcb9"/><rect x="193" y="80" width="6" height="7" fill="#a9dcb9"/><path d="M0 58H5.5L6.5 95 16 100 27 109 53.5 118.5V133.5H38L31 128 15 114 0 106z" fill="#a9dcb9"/><path d="M177.5 20H186L189.5 30V56H173.5L168.5 42 173.5 29z" fill="#bfe5c9"/><path d="M206.4 0H256.5V133.5H224C222 126 218 120 216 114 214 108 212 103 212 96 215 92 212 85 211 78 212 70 215 60 217 50 217.3 38 215 30 213.5 24 213.5 14 210 8 206.4 0z" fill="#6dcfe6"/><path d="M216 116c6 4 10 10 12 17.5h-12z" fill="#ececec"/><path d="M214 112c10 6 22 8 42.5 8V133.5H226c-4-8-8-14-12-21.5z" fill="#b9e0c4"/><rect x="246" y="112" width="10.5" height="21.5" fill="#efe3c6"/><path d="M176.2 0L189.5 33Q191.5 38 191.5 44V133.5" fill="none" stroke="#7090b0" stroke-width="2.6"/><path d="M186 0L199 32V133.5M196 0L210 36V133.5M203 0L214 28" stroke="#d6d8dc" stroke-width="1" fill="none"/><rect x="65.7" y="28.650000000000002" width="26.799999999999997" height="1.3" fill="#2f9c5a" opacity="0.45"/><rect x="35.7" y="83.35" width="13.099999999999994" height="1.3" fill="#2f9c5a" opacity="0.45"/><rect x="35.7" y="87.05" width="13.099999999999994" height="1.3" fill="#2f9c5a" opacity="0.45"/><rect x="75" y="90.85" width="16.5" height="1.3" fill="#2f9c5a" opacity="0.45"/><rect x="0.5" y="85.35" width="9.5" height="1.3" fill="#2f9c5a" opacity="0.45"/><rect x="0.5" y="88.85" width="9.5" height="1.3" fill="#2f9c5a" opacity="0.45"/><rect x="0.5" y="92.35" width="9.5" height="1.3" fill="#2f9c5a" opacity="0.45"/><rect x="27.5" y="122.14999999999999" width="19.799999999999997" height="1.3" fill="#2f9c5a" opacity="0.45"/><rect x="164.5" y="44.95" width="11.5" height="1.3" fill="#2f9c5a" opacity="0.45"/><rect x="164.5" y="49.050000000000004" width="11.5" height="1.3" fill="#2f9c5a" opacity="0.45"/><rect x="222.8" y="121.14999999999999" width="30.19999999999999" height="1.3" fill="#2f9c5a" opacity="0.45"/><rect x="222.8" y="124.55" width="30.19999999999999" height="1.3" fill="#2f9c5a" opacity="0.45"/><rect x="204.7" y="105.14999999999999" width="19.100000000000023" height="1.3" fill="#3a78d0" opacity="0.45"/><rect x="204.7" y="108.55" width="19.100000000000023" height="1.3" fill="#3a78d0" opacity="0.45"/><rect x="16.7" y="37.15" width="13.900000000000002" height="1.3" fill="#555" opacity="0.35"/><rect x="52.7" y="37.15" width="13.399999999999991" height="1.3" fill="#555" opacity="0.35"/><rect x="30.6" y="52.15" width="31.1" height="1.3" fill="#555" opacity="0.35"/><rect x="30.6" y="56.25" width="31.1" height="1.3" fill="#555" opacity="0.35"/><rect x="122" y="12.85" width="29" height="1.3" fill="#555" opacity="0.35"/><rect x="122" y="16.05" width="29" height="1.3" fill="#555" opacity="0.35"/><rect x="124" y="52.95" width="28" height="1.3" fill="#555" opacity="0.35"/><rect x="124" y="56.25" width="28" height="1.3" fill="#555" opacity="0.35"/><rect x="102" y="61.65" width="24" height="1.3" fill="#555" opacity="0.35"/><rect x="102" y="64.64999999999999" width="24" height="1.3" fill="#555" opacity="0.35"/><rect x="126" y="47.550000000000004" width="10" height="1.3" fill="#555" opacity="0.35"/><rect x="174.6" y="131.25" width="12.099999999999994" height="1.3" fill="#555" opacity="0.35"/><rect x="89" y="107.14999999999999" width="13" height="1.3" fill="#555" opacity="0.35"/><rect x="127" y="105.55" width="15" height="1.3" fill="#555" opacity="0.35"/><rect x="117" y="115.14999999999999" width="10" height="1.3" fill="#555" opacity="0.35"/><rect x="107" y="122.55" width="11" height="1.3" fill="#555" opacity="0.35"/><rect x="111.6" y="131.25" width="10.400000000000006" height="1.3" fill="#555" opacity="0.35"/><rect x="91" y="82.35" width="11" height="1.3" fill="#555" opacity="0.35"/><rect x="117" y="85.05" width="8" height="1.3" fill="#555" opacity="0.35"/><rect x="10.2" y="69.7" width="23.8" height="1.6" fill="#333" opacity="0.55"/><rect x="10.2" y="73.60000000000001" width="23.8" height="1.6" fill="#333" opacity="0.55"/><rect x="92" y="72.4" width="23" height="1.6" fill="#333" opacity="0.55"/><rect x="140.5" y="28.9" width="22.0" height="1.6" fill="#333" opacity="0.55"/><rect x="146" y="32.6" width="11" height="1.6" fill="#333" opacity="0.55"/><rect x="194.7" y="73.2" width="18.100000000000023" height="1.6" fill="#333" opacity="0.55"/><rect x="5.45" y="3.5" width="1.1" height="14.5" fill="#555" opacity="0.45"/><rect x="22.75" y="3.5" width="1.1" height="14.5" fill="#555" opacity="0.45"/><rect x="31.749999999999996" y="3.5" width="1.1" height="14.5" fill="#555" opacity="0.45"/><rect x="57.85" y="3.5" width="1.1" height="14.5" fill="#555" opacity="0.45"/><rect x="66.85000000000001" y="3.5" width="1.1" height="14.5" fill="#555" opacity="0.45"/><rect x="75.05" y="3.5" width="1.1" height="14.5" fill="#555" opacity="0.45"/><rect x="83.95" y="3.5" width="1.1" height="14.5" fill="#555" opacity="0.45"/><rect x="92.95" y="3.5" width="1.1" height="14.5" fill="#555" opacity="0.45"/><rect x="12.95" y="40" width="1.1" height="16" fill="#555" opacity="0.45"/><rect x="21.05" y="52.8" width="1.1" height="13.200000000000003" fill="#555" opacity="0.45"/><rect x="74.95" y="48" width="1.1" height="14.600000000000001" fill="#555" opacity="0.45"/><rect x="92.95" y="57" width="1.1" height="13" fill="#555" opacity="0.45"/><rect x="63.45" y="75" width="1.1" height="13" fill="#555" opacity="0.45"/><rect x="81.95" y="75" width="1.1" height="13" fill="#555" opacity="0.45"/><rect x="123.95" y="75" width="1.1" height="13" fill="#555" opacity="0.45"/><rect x="159.45" y="60" width="1.1" height="12" fill="#555" opacity="0.45"/><rect x="149.95" y="88" width="1.1" height="15" fill="#555" opacity="0.45"/><rect x="133.45" y="94" width="1.1" height="12" fill="#555" opacity="0.45"/><rect x="117.95" y="96" width="1.1" height="14" fill="#555" opacity="0.45"/><rect x="194.45" y="82" width="1.1" height="14" fill="#555" opacity="0.45"/><rect x="42.45" y="100" width="1.1" height="12" fill="#555" opacity="0.45"/><path d="M154 18.7c-1.7-2.1-2.8-3.4-2.8-4.7a2.8 2.8 0 0 1 5.6 0c0 1.3-1.1 2.6-2.8 4.7z" fill="#7d9db0"/><circle cx="154" cy="14.0" r="1" fill="#fff"/><path d="M96 33.7c-1.7-2.1-2.8-3.4-2.8-4.7a2.8 2.8 0 0 1 5.6 0c0 1.3-1.1 2.6-2.8 4.7z" fill="#2aa055"/><circle cx="96" cy="29.0" r="1" fill="#fff"/><path d="M65.5 59.5c-1.7-2.1-2.8-3.4-2.8-4.7a2.8 2.8 0 0 1 5.6 0c0 1.3-1.1 2.6-2.8 4.7z" fill="#6f8fa6"/><circle cx="65.5" cy="54.8" r="1" fill="#fff"/><path d="M134.5 67.6c-1.7-2.1-2.8-3.4-2.8-4.7a2.8 2.8 0 0 1 5.6 0c0 1.3-1.1 2.6-2.8 4.7z" fill="#6f8fa6"/><circle cx="134.5" cy="62.9" r="1" fill="#fff"/><path d="M145.7 67.6c-1.7-2.1-2.8-3.4-2.8-4.7a2.8 2.8 0 0 1 5.6 0c0 1.3-1.1 2.6-2.8 4.7z" fill="#6f8fa6"/><circle cx="145.7" cy="62.9" r="1" fill="#fff"/><path d="M42.3 97.8c-1.7-2.1-2.8-3.4-2.8-4.7a2.8 2.8 0 0 1 5.6 0c0 1.3-1.1 2.6-2.8 4.7z" fill="#2aa055"/><circle cx="42.3" cy="93.1" r="1" fill="#fff"/><path d="M83.3 101.4c-1.7-2.1-2.8-3.4-2.8-4.7a2.8 2.8 0 0 1 5.6 0c0 1.3-1.1 2.6-2.8 4.7z" fill="#2aa055"/><circle cx="83.3" cy="96.7" r="1" fill="#fff"/><path d="M198.8 32.4c-1.7-2.1-2.8-3.4-2.8-4.7a2.8 2.8 0 0 1 5.6 0c0 1.3-1.1 2.6-2.8 4.7z" fill="#3ab4c6"/><circle cx="198.8" cy="27.7" r="1" fill="#fff"/><path d="M213 35.800000000000004c-1.7-2.1-2.8-3.4-2.8-4.7a2.8 2.8 0 0 1 5.6 0c0 1.3-1.1 2.6-2.8 4.7z" fill="#6f70c8"/><circle cx="213" cy="31.1" r="1" fill="#fff"/><path d="M196.7 106.9c-1.7-2.1-2.8-3.4-2.8-4.7a2.8 2.8 0 0 1 5.6 0c0 1.3-1.1 2.6-2.8 4.7z" fill="#6f8fa6"/><circle cx="196.7" cy="102.2" r="1" fill="#fff"/><circle cx="103" cy="49" r="2" fill="none" stroke="#888" stroke-width="0.8"/><rect x="226" y="114" width="11" height="3" fill="#555" opacity="0.6"/><path d="M129.6 74.5c-3.2-3.8-4.8-6-4.8-8.4a4.8 4.8 0 0 1 9.6 0c0 2.4-1.6 4.6-4.8 8.4z" fill="#c3122c"/><circle cx="129.6" cy="66" r="1.5" fill="#fff"/></svg>
<div class="a" style="left:742.2px;top:279.7px;width:2.6px;height:2.6px;border-radius:50%;background:#2a2a2a"></div>
<div class="a" style="left:742.2px;top:284.4px;width:2.6px;height:2.6px;border-radius:50%;background:#2a2a2a"></div>
<div class="a" style="left:742.2px;top:289.09999999999997px;width:2.6px;height:2.6px;border-radius:50%;background:#2a2a2a"></div>
<svg class="a" style="left:640px;top:411px" width="17" height="13" viewBox="0 0 17 13"><circle cx="5.6" cy="7.3" r="5" fill="none" stroke="#555" stroke-width="1.1"/><circle cx="3.9" cy="6.1" r="0.75" fill="#555"/><circle cx="7.3" cy="6.1" r="0.75" fill="#555"/><path d="M3.2 8.7c1.3 1.7 3.5 1.7 4.8 0" fill="none" stroke="#555" stroke-width="1"/><path d="M13.6 0v5.4M10.9 2.7h5.4" stroke="#555" stroke-width="1.1"/></svg>
<svg class="a" style="left:660.5px;top:411.5px" width="12" height="12" viewBox="0 0 12 12"><path d="M6 0.5l1.7 3.6 3.9 0.5-2.9 2.7 0.8 3.9L6 9.3l-3.5 1.9 0.8-3.9L0.4 4.6l3.9-0.5z" fill="#2e2e2e"/></svg>
<div class="t" style="left:679.92px;top:413.00px;font-size:8.3px;color:#606060;">2:41 PM (364D)</div>
<svg class="a" style="left:740px;top:414px" width="9" height="7" viewBox="0 0 9 7"><path d="M0.6 3.5l2.5 2.6 5.3-5.5" fill="none" stroke="#555" stroke-width="1"/></svg>
<div class="t" style="left:283.00px;top:440.00px;font-size:9.8px;color:#2a2a2a;font-weight:bold;text-shadow:0.128px 0 0 currentColor;">Diego Ramirez</div>
<div class="t" style="left:353.30px;top:440.00px;font-size:10.4px;color:#2a2a2a;text-shadow:0.468px 0 0 currentColor;">is typing...</div>
<div class="a" style="left:270px;top:450px;width:530px;height:75px;background:#f3f3f3;border-radius:0px;"></div>
<div class="a" style="left:270px;top:450px;width:1px;height:75px;background:#bdbdbd;border-radius:0px;"></div>
<div class="a" style="left:277px;top:457px;width:540px;height:35px;border-radius:4px;background:#fafafa;border:1px solid #c4c4c4"></div>
<div class="t" style="left:283.60px;top:468.00px;font-size:13.2px;color:#7e7e7e;text-shadow:0.468px 0 0 currentColor;">Expires in 30 days</div>
<svg class="a" style="left:782px;top:467px" width="12" height="15" viewBox="0 0 12 15"><rect x="3.3" y="0.5" width="5.4" height="9.2" rx="2.7" fill="#6a6a6a"/><path d="M1.2 6.5c0 2.6 2.1 4.4 4.8 4.4s4.8-1.8 4.8-4.4" fill="none" stroke="#6a6a6a" stroke-width="1.1"/><path d="M6 10.9v2.6M3.5 13.8h5" stroke="#6a6a6a" stroke-width="1.1"/></svg>
<svg class="a" style="left:288.5px;top:502.5px" width="12" height="12" viewBox="0 0 12 12"><path d="M6 0.5v11M0.5 6h11" stroke="#333" stroke-width="1.2"/></svg>
<div class="a" style="left:311px;top:496px;width:1px;height:24px;background:#8a8a8a;border-radius:0px;"></div>
<svg class="a" style="left:318px;top:500px" width="56" height="18" viewBox="0 0 56 18"><path d="M2.9 14.3L6.9 3.3 10.9 14.3M4.3 10.6H9.5" fill="none" stroke="#3c3c3c" stroke-width="1.15"/><circle cx="16.1" cy="10.3" r="3.7" fill="none" stroke="#3c3c3c" stroke-width="1.15"/><path d="M19.9 6.3v8" stroke="#3c3c3c" stroke-width="1.15"/><g transform="translate(3.8,-0.3)"><path d="M47.5 9.5c0 2 -0.8 3.2 -2.1 3.2s-1.6-1-1.6-2.4V6.2M43.8 9.2a2.9 2.9 0 1 1 0-0.1z" fill="none" stroke="#3c3c3c" stroke-width="1.1"/><path d="M47.5 9.2A6.6 6.6 0 1 0 44 15" fill="none" stroke="#3c3c3c" stroke-width="1.1"/></g></svg>
<svg class="a" style="left:389.5px;top:501.5px" width="15" height="15" viewBox="0 0 15 15"><circle cx="7.5" cy="7.5" r="6.6" fill="none" stroke="#3a3a3a" stroke-width="1.1"/><circle cx="5.2" cy="6" r="0.9" fill="#3a3a3a"/><circle cx="9.8" cy="6" r="0.9" fill="#3a3a3a"/><path d="M4.5 9c1.6 2 4.4 2 6 0" fill="none" stroke="#3a3a3a" stroke-width="1.1"/></svg>
<svg class="a" style="left:787.5px;top:501px" width="13" height="14" viewBox="0 0 13 14"><path d="M0.6 0.8L14 6.6V7.4L0.6 13.2L2.4 7z" fill="#1d3fcc"/><path d="M0 7.2H14" stroke="#f3f3f3" stroke-width="1.6"/></svg>
</body></html>
